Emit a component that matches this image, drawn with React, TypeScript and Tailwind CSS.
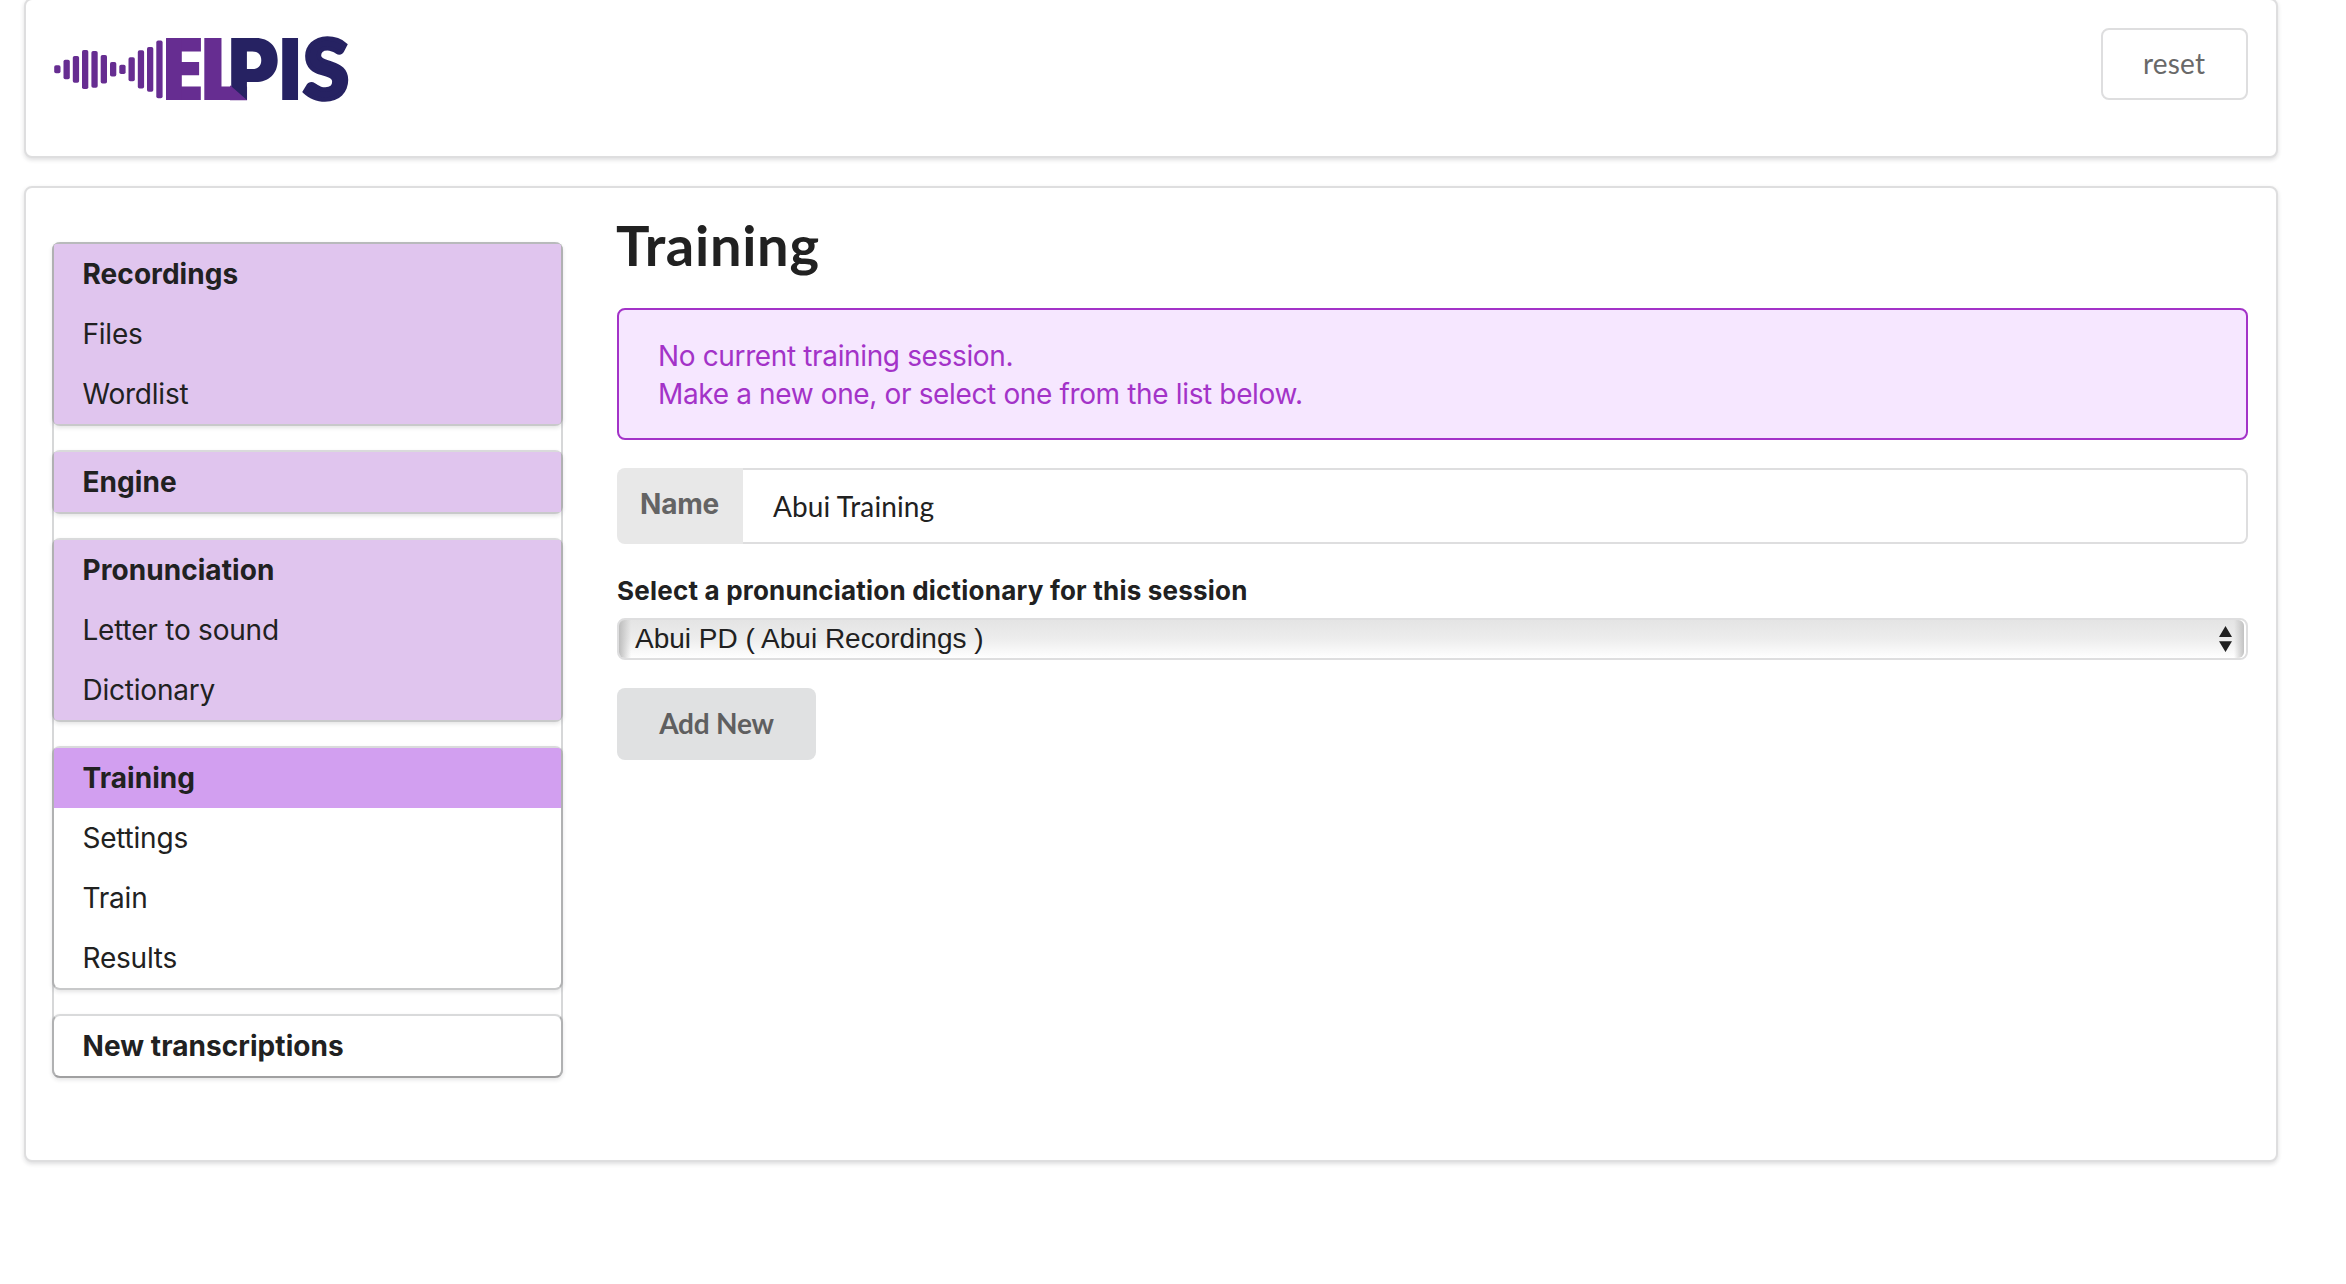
import React from 'react'

type Group = {
  title: string
  items: string[]
  done?: boolean
  active?: boolean
}

const groups: Group[] = [
  { title: 'Recordings', items: ['Files', 'Wordlist'], done: true },
  { title: 'Engine', items: [], done: true },
  { title: 'Pronunciation', items: ['Letter to sound', 'Dictionary'], done: true },
  { title: 'Training', items: ['Settings', 'Train', 'Results'], active: true },
  { title: 'New transcriptions', items: [] },
]

// Sound wave bars: x, top, bottom
const bars: [number, number, number][] = [
  [54.2, 65.3, 73.2],
  [63.5, 59.7, 79.2],
  [72.8, 56, 82.8],
  [82, 50, 89],
  [91.4, 51, 87.8],
  [100.7, 55, 83.6],
  [110, 62, 76.6],
  [119.3, 64.7, 74],
  [128.5, 57.3, 81.2],
  [137.8, 50.3, 88.5],
  [147, 47, 91.8],
  [156.3, 40.6, 98.2],
]

function Logo() {
  return (
    <svg
      className="h-[80px] w-[304px] shrink-0 overflow-visible"
      viewBox="52 28 304 80"
      role="img"
      aria-label="ELPIS"
    >
      <g fill="#662d91">
        {bars.map(([x, top, bottom]) => (
          <rect key={x} x={x} y={top} width={6.3} height={bottom - top} rx={1.8} />
        ))}
        <g className="font-['Inter',sans-serif] text-[100px] font-black">
          <text transform="translate(163 100) scale(0.664 0.846)">E</text>
          <text transform="translate(200.3 100) scale(0.87 0.846)">L</text>
        </g>
        <rect x={166} y={38.5} width={15.8} height={61.5} />
      </g>
      <g fill="#262262">
        <g className="font-['Inter',sans-serif] text-[100px] font-black">
          <text transform="translate(227.5 100) scale(0.795 0.846)">P</text>
          <text transform="translate(278.6 100) scale(0.8 0.846)">I</text>
        </g>
        <text
          className="font-['Lato',sans-serif] text-[100px] font-black"
          transform="translate(303.6 98.6) scale(0.82 0.82)"
          stroke="#262262"
          strokeWidth={5.5}
        >
          S
        </text>
      </g>
      <path d="M230 85.2L231.5 86.4L247.2 100.2H230Z" fill="#662d91" />
    </svg>
  )
}

function NavGroup({ group, first, last }: { group: Group; first: boolean; last: boolean }) {
  const edge = `${first ? 'border-t-[#b8babb]' : 'border-t-[#d9dadb]'} ${
    last ? 'border-b-[#a0a0a1]' : 'border-b-[#c8c9ca]'
  }`
  const head = group.active ? 'bg-[#d29ff0]' : group.done ? 'bg-[#e0c5ee]' : ''
  return (
    <div
      className={`-mx-0.5 rounded-lg border-2 border-x-[#b0b1b2] bg-white shadow-[0_2px_4px_rgba(34,36,38,0.12)] ${edge}`}
    >
      <div className={group.done ? 'rounded-[3px] bg-[#e0c5ee]' : ''}>
        <div
          className={`flex h-[60px] items-center rounded-t-[3px] pl-[28.5px] font-bold tracking-[0.06px] ${head}`}
        >
          {group.title}
        </div>
        {group.items.map((item) => (
          <div key={item} className="flex h-[60px] items-center pl-[28.5px] tracking-[-0.22px]">
            {item}
          </div>
        ))}
      </div>
    </div>
  )
}

export default function App() {
  return (
    <div className="min-h-[1284px] w-[2346px] overflow-hidden bg-white pl-6 font-['Inter',sans-serif] text-[28px] text-[#212121]">
      <header className="-mt-0.5 flex h-[160px] w-[2254px] items-start justify-between rounded-lg border-2 border-[#dededf] bg-white py-7 pr-7 pl-[26px] shadow-[0_2px_4px_rgba(34,36,38,0.15)]">
        <Logo />
        <button className="flex h-[72px] w-[147px] items-center justify-center rounded-lg border-2 border-[#dededf] pr-px pb-[2px] font-['Lato',sans-serif] tracking-[0.2px] text-[#696969]">
          reset
        </button>
      </header>

      <div className="mt-7 flex h-[976px] w-[2254px] items-start gap-[54px] rounded-lg border-2 border-[#dededf] bg-white py-7 pr-7 pl-[26px] shadow-[0_2px_4px_rgba(34,36,38,0.15)]">
        <nav className="mt-[26px] flex w-[511px] shrink-0 flex-col gap-6 rounded-lg border-x-2 border-[#d6d7d8]">
          {groups.map((group, i) => (
            <NavGroup
              key={group.title}
              group={group}
              first={i === 0}
              last={i === groups.length - 1}
            />
          ))}
        </nav>

        <main className="flex grow flex-col items-stretch">
          <h1 className="-ml-px pt-px font-['Lato',sans-serif] text-[56px] leading-[56px] font-bold tracking-[0.7px]">
            Training
          </h1>

          <div className="mt-[35px] h-[132px] rounded-lg border-2 border-[#a333c8] bg-[#f6e7ff] pt-[27px] pl-[39px] leading-[38px] tracking-[-0.36px] text-[#a333c8]">
            <p>No current training session.</p>
            <p>Make a new one, or select one from the list below.</p>
          </div>

          <div className="mt-7 flex h-[76px]">
            <label className="flex w-[126px] items-center rounded-l-lg bg-[#e8e8e8] pb-1 pl-[23px] font-bold tracking-[-0.2px] text-[#646464]">
              Name
            </label>
            <div className="flex grow items-center rounded-r-lg border-2 border-l-0 border-[#dededf] pl-[30px] font-['Lato',sans-serif] tracking-[0.1px]">
              Abui Training
            </div>
          </div>

          <label className="mt-[29px] text-[26px] leading-9 font-bold tracking-[0.21px]">
            Select a pronunciation dictionary for this session
          </label>
          <div className="mt-[9px] flex h-[42px] items-stretch overflow-hidden rounded-lg border-2 border-[#dededf] bg-linear-to-b from-[#e4e4e4] via-[#ededed] to-white">
            <div className="w-3 bg-linear-to-r from-[#bdbdbd] to-transparent" />
            <div className="flex grow items-center pl-1 font-['Liberation_Sans',Arial,sans-serif]">
              Abui PD ( Abui Recordings )
            </div>
            <svg className="mt-[6px] mr-[2px] h-[26px] w-[13px]" viewBox="0 0 13 26">
              <path d="M6.5 0L13 11H0ZM0 15.2H13L6.5 26Z" fill="#212121" />
            </svg>
            <div className="mr-[2px] w-[10px] rounded-r-md bg-linear-to-r from-transparent to-[#c2c2c2] shadow-[0_0_0_2px_#ffffff] [clip-path:inset(0_-2px_0_0)]" />
          </div>

          <button className="mt-7 flex h-[72px] w-[199px] items-center justify-center rounded-lg bg-[#e0e1e2] pb-[2px] font-['Lato',sans-serif] font-bold tracking-[-0.2px] text-[#5f5f60]">
            Add New
          </button>
        </main>
      </div>
    </div>
  )
}
